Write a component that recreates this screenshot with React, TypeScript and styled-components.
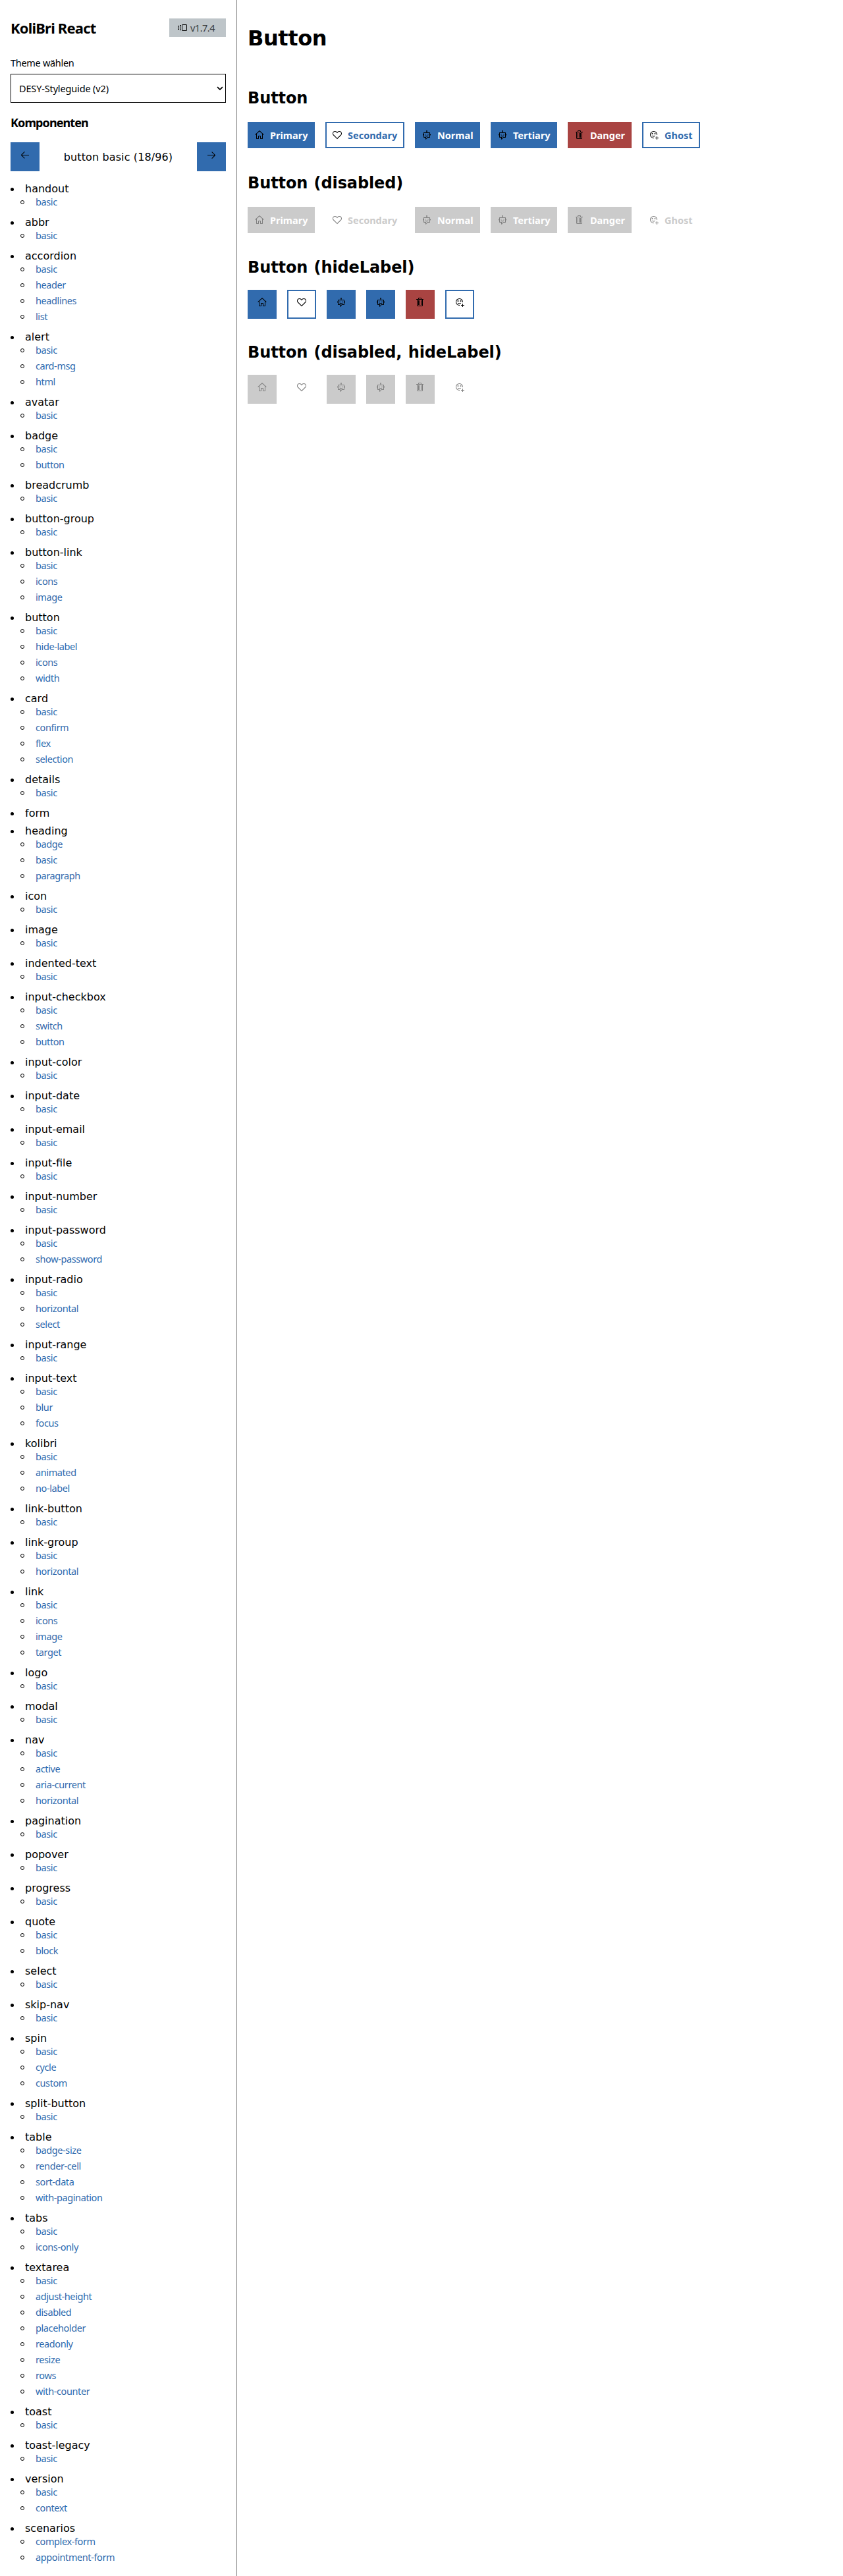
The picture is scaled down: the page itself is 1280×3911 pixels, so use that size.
import React from 'react';
import styled, { createGlobalStyle, css } from 'styled-components';
import {
  VscArrowLeft,
  VscArrowRight,
  VscChevronDown,
  VscHeart,
  VscHome,
  VscHubot,
  VscReactions,
  VscTrash,
  VscVersions,
} from 'react-icons/vsc';

const color = {
  blue: '#316bae',
  red: '#a94442',
  disabled: '#cbcbcb',
  badge: '#bec5c9',
  line: '#808080',
};

const sans = "'Noto Sans', 'Open Sans', sans-serif";
const wide = "Verdana, 'DejaVu Sans', sans-serif";

const GlobalStyle = createGlobalStyle`
  *, *::before, *::after { box-sizing: border-box; }
  body {
    margin: 0;
    background: #fff;
    color: #000;
    font-family: ${wide};
    font-size: 16px;
  }
`;

const Page = styled.div`
  display: flex;
  height: 3911px;
`;

const Sidebar = styled.aside`
  flex: 0 0 360px;
  padding: 28px 16px 0;
  border-right: 1px solid ${color.line};
`;

const SidebarHeader = styled.header`
  display: flex;
  align-items: center;
  justify-content: space-between;
  height: 28px;
`;

const AppName = styled.h1`
  margin: 0;
  font: 700 22px/28px ${sans};
  letter-spacing: -0.8px;
`;

const Version = styled.span`
  display: flex;
  align-items: center;
  gap: 4px;
  width: 86px;
  height: 28px;
  padding-left: 12px;
  background: ${color.badge};
  color: #3a3d3f;
  font: 14.5px/28px ${sans};
  letter-spacing: -0.5px;

  svg {
    color: #000;
  }
`;

const Label = styled.div`
  margin-top: 29px;
  font: 14.5px/20px ${sans};
  letter-spacing: -0.3px;
`;

const Select = styled.button`
  display: flex;
  align-items: center;
  justify-content: space-between;
  width: 327px;
  height: 44px;
  margin-top: 7px;
  padding: 0 2px 0 12px;
  border: 1px solid #000;
  background: #fff;
  color: #000;
  text-align: left;
  font: 14.5px/20px ${sans};
  letter-spacing: -0.15px;

  svg {
    stroke: currentColor;
    stroke-width: 1.4px;
  }
`;

const SectionName = styled.h2`
  margin: 18px 0 0;
  font: 700 18px/24px ${sans};
  letter-spacing: -0.9px;
`;

const Pager = styled.div`
  display: flex;
  align-items: center;
  justify-content: space-between;
  margin-top: 18px;
  letter-spacing: 0.12px;
`;

type Tone = 'solid' | 'danger' | 'outline';

const tones = {
  solid: css`
    background: ${color.blue};
    border-color: ${color.blue};
    color: #fff;
  `,
  danger: css`
    background: ${color.red};
    border-color: ${color.red};
    color: #fff;
  `,
  outline: css`
    background: #fff;
    border-color: ${color.blue};
    color: ${color.blue};
  `,
};

const disabledTones = {
  solid: css`
    background: ${color.disabled};
    border-color: ${color.disabled};
    color: #fff;
  `,
  danger: css`
    background: ${color.disabled};
    border-color: ${color.disabled};
    color: #fff;
  `,
  outline: css`
    background: transparent;
    border-color: transparent;
    color: ${color.disabled};
  `,
};

const ButtonBase = styled.button<{ $tone: Tone }>`
  display: flex;
  align-items: center;
  border: 2px solid;
  ${(p) => (p.disabled ? disabledTones[p.$tone] : tones[p.$tone])}

  svg {
    flex: none;
    color: ${(p) => (p.disabled ? '#7f7f7f' : '#000')};
  }
`;

const LabelButton = styled(ButtonBase)<{ $width: number }>`
  gap: 8px;
  width: ${(p) => p.$width}px;
  height: 40px;
  padding: 0 8px;
  font: 700 14.5px/20px ${sans};
  letter-spacing: 0;
  white-space: nowrap;
`;

const IconButton = styled(ButtonBase)`
  justify-content: center;
  width: 44px;
  height: 44px;
  padding: 0 0 6px;
`;

const ComponentList = styled.ul`
  margin: 16px 0 0;
  padding: 0;
  list-style: none;
`;

const ComponentItem = styled.li`
  margin-bottom: 7px;
`;

const ComponentName = styled.div`
  display: flex;
  align-items: flex-start;
  height: 20px;
  line-height: 21px;

  &::before {
    content: '';
    width: 5px;
    height: 5px;
    margin: 9px 17px 0 0;
    border-radius: 50%;
    background: #000;
  }
`;

const SampleList = styled.ul`
  display: flow-root;
  margin: 0;
  padding: 0 0 0 15px;
  list-style: none;
`;

const Sample = styled.li`
  display: flex;
  align-items: center;
  height: 20px;
  margin-bottom: 4px;

  &::before {
    content: '';
    width: 6px;
    height: 6px;
    margin: 2px 17px 0 0;
    border: 1px solid #000;
    border-radius: 50%;
  }
`;

const SampleLink = styled.a`
  color: ${color.blue};
  font: 14.5px/20px ${sans};
  letter-spacing: -0.4px;
`;

const Main = styled.main`
  flex: 1;
  padding: 38px 16px 0;
`;

const Title = styled.h1`
  margin: 0 0 56px;
  font: 700 32px/40px ${wide};
  letter-spacing: -0.4px;
`;

const Group = styled.section`
  height: 128.6px;
`;

const GroupTitle = styled.h2`
  margin: 0 0 19.2px;
  font: 700 24px/30px ${wide};
  letter-spacing: -0.1px;
  word-spacing: 1px;
`;

const Row = styled.div`
  display: flex;
  align-items: center;
  gap: 16px;
  height: 44px;
`;

const components: [string, string][] = [
  ['handout', 'basic'],
  ['abbr', 'basic'],
  ['accordion', 'basic header headlines list'],
  ['alert', 'basic card-msg html'],
  ['avatar', 'basic'],
  ['badge', 'basic button'],
  ['breadcrumb', 'basic'],
  ['button-group', 'basic'],
  ['button-link', 'basic icons image'],
  ['button', 'basic hide-label icons width'],
  ['card', 'basic confirm flex selection'],
  ['details', 'basic'],
  ['form', ''],
  ['heading', 'badge basic paragraph'],
  ['icon', 'basic'],
  ['image', 'basic'],
  ['indented-text', 'basic'],
  ['input-checkbox', 'basic switch button'],
  ['input-color', 'basic'],
  ['input-date', 'basic'],
  ['input-email', 'basic'],
  ['input-file', 'basic'],
  ['input-number', 'basic'],
  ['input-password', 'basic show-password'],
  ['input-radio', 'basic horizontal select'],
  ['input-range', 'basic'],
  ['input-text', 'basic blur focus'],
  ['kolibri', 'basic animated no-label'],
  ['link-button', 'basic'],
  ['link-group', 'basic horizontal'],
  ['link', 'basic icons image target'],
  ['logo', 'basic'],
  ['modal', 'basic'],
  ['nav', 'basic active aria-current horizontal'],
  ['pagination', 'basic'],
  ['popover', 'basic'],
  ['progress', 'basic'],
  ['quote', 'basic block'],
  ['select', 'basic'],
  ['skip-nav', 'basic'],
  ['spin', 'basic cycle custom'],
  ['split-button', 'basic'],
  ['table', 'badge-size render-cell sort-data with-pagination'],
  ['tabs', 'basic icons-only'],
  ['textarea', 'basic adjust-height disabled placeholder readonly resize rows with-counter'],
  ['toast', 'basic'],
  ['toast-legacy', 'basic'],
  ['version', 'basic context'],
  ['scenarios', 'complex-form appointment-form'],
];

const buttons: { label: string; tone: Tone; width: number; Icon: typeof VscHome }[] = [
  { label: 'Primary', tone: 'solid', width: 102, Icon: VscHome },
  { label: 'Secondary', tone: 'outline', width: 120, Icon: VscHeart },
  { label: 'Normal', tone: 'solid', width: 99, Icon: VscHubot },
  { label: 'Tertiary', tone: 'solid', width: 101, Icon: VscHubot },
  { label: 'Danger', tone: 'danger', width: 97, Icon: VscTrash },
  { label: 'Ghost', tone: 'outline', width: 88, Icon: VscReactions },
];

const groups = [
  { title: 'Button', disabled: false, hideLabel: false },
  { title: 'Button (disabled)', disabled: true, hideLabel: false },
  { title: 'Button (hideLabel)', disabled: false, hideLabel: true },
  { title: 'Button (disabled, hideLabel)', disabled: true, hideLabel: true },
];

export default function App() {
  return (
    <>
      <GlobalStyle />
      <Page>
        <Sidebar>
          <SidebarHeader>
            <AppName>KoliBri React</AppName>
            <Version>
              <VscVersions size={16} />
              v1.7.4
            </Version>
          </SidebarHeader>
          <Label>Theme wählen</Label>
          <Select>
            DESY-Styleguide (v2)
            <VscChevronDown size={12} />
          </Select>
          <SectionName>Komponenten</SectionName>
          <Pager>
            <IconButton $tone="solid" aria-label="previous">
              <VscArrowLeft size={16} />
            </IconButton>
            <span>button basic (18/96)</span>
            <IconButton $tone="solid" aria-label="next">
              <VscArrowRight size={16} />
            </IconButton>
          </Pager>
          <ComponentList>
            {components.map(([name, samples]) => (
              <ComponentItem key={name}>
                <ComponentName>{name}</ComponentName>
                {samples && (
                  <SampleList>
                    {samples.split(' ').map((sample) => (
                      <Sample key={sample}>
                        <SampleLink>{sample}</SampleLink>
                      </Sample>
                    ))}
                  </SampleList>
                )}
              </ComponentItem>
            ))}
          </ComponentList>
        </Sidebar>
        <Main>
          <Title>Button</Title>
          {groups.map((group) => (
            <Group key={group.title}>
              <GroupTitle>{group.title}</GroupTitle>
              <Row>
                {buttons.map(({ label, tone, width, Icon }) =>
                  group.hideLabel ? (
                    <IconButton key={label} $tone={tone} disabled={group.disabled} aria-label={label}>
                      <Icon size={16} />
                    </IconButton>
                  ) : (
                    <LabelButton key={label} $tone={tone} $width={width} disabled={group.disabled}>
                      <Icon size={16} />
                      {label}
                    </LabelButton>
                  ),
                )}
              </Row>
            </Group>
          ))}
        </Main>
      </Page>
    </>
  );
}
